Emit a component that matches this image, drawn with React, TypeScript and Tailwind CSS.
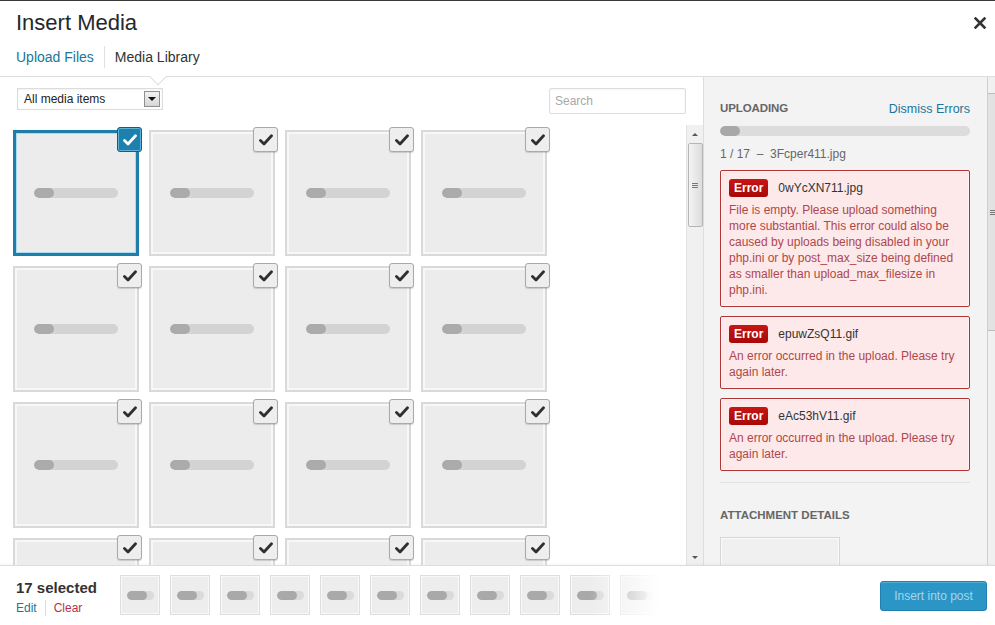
import React from "react";

const FONT = { fontFamily: '"Liberation Sans", Arial, sans-serif' };

function Check({ selected }: { selected?: boolean }) {
  return (
    <div
      className={`absolute -top-[3px] -right-[3px] w-[25px] h-[25px] rounded-[3px] flex items-center justify-center ${
        selected
          ? "bg-[#1e80ad] border border-[#0f5f84] shadow-[inset_0_0_0_1px_#5fb1d6]"
          : "bg-[#eeeeee] border border-[#a9a9a9] shadow-[0_1px_1px_rgba(0,0,0,0.15)]"
      }`}
    >
      <svg width="14" height="12" viewBox="0 0 14 12">
        <path
          d="M1.5 6.5 L5 10 L12.5 1.8"
          fill="none"
          stroke={selected ? "#ffffff" : "#2f2f2f"}
          strokeWidth="2.8"
          strokeLinecap="round"
          strokeLinejoin="round"
        />
      </svg>
    </div>
  );
}

function Tile({ selected }: { selected?: boolean }) {
  return (
    <div className="relative w-[126px] h-[126px]">
      <div
        className={`w-full h-full flex items-center justify-center bg-[#ececec] ${
          selected
            ? "border-[3px] border-[#1f7ea9] shadow-[inset_0_0_0_1px_#a9dcef]"
            : "border-[2px] border-[#d9d9d9] shadow-[inset_0_0_0_2px_#f7f7f7]"
        }`}
      >
        <div className="w-[84px] h-[10px] rounded-full bg-[#d3d3d3] overflow-hidden">
          <div className="w-[20px] h-full rounded-full bg-[#ababab]" />
        </div>
      </div>
      <Check selected={selected} />
    </div>
  );
}

function Thumb() {
  return (
    <div className="w-[40px] h-[40px] bg-[#ededed] border border-[#dedede] shadow-[inset_0_0_0_1px_#f8f8f8] flex items-center pl-[6px]">
      <div className="w-[27px] h-[9px] rounded-full bg-[#dadada] overflow-hidden">
        <div className="w-[20px] h-full rounded-full bg-[#a9a9a9]" />
      </div>
    </div>
  );
}

function ErrorBox({ file, msg }: { file: string; msg: string }) {
  return (
    <div className="border border-[#b13535] bg-[#fde9e9] rounded-[2px] px-[8px] pt-[6px] pb-[8px] shadow-[inset_0_0_0_1px_#fff3f3]">
      <div className="flex items-center h-[22px]">
        <span className="inline-flex items-center justify-center h-[18px] px-[5px] rounded-[3px] bg-gradient-to-b from-[#c81515] to-[#a80808] text-white font-bold text-[12px]">
          Error
        </span>
        <span className="ml-[10px] text-[12px] text-[#333]">{file}</span>
      </div>
      <p className="mt-[3px] text-[12px] leading-[16px] text-[#b0474a]">{msg}</p>
    </div>
  );
}

function Scrollbar() {
  return (
    <div className="w-[17px] h-full bg-[#f0f0f0] border-l border-[#e2e2e2] flex flex-col items-center">
      <div className="h-[18px] flex items-center justify-center">
        <div className="w-0 h-0 border-l-[3px] border-r-[3px] border-b-[3px] border-l-transparent border-r-transparent border-b-[#555]" />
      </div>
      <div className="w-[15px] h-[84px] rounded-[2px] border border-[#b5b5b5] bg-gradient-to-r from-[#f4f4f4] to-[#dcdcdc] flex items-center justify-center">
        <div className="flex flex-col gap-[1px]">
          <div className="w-[6px] h-[1px] bg-[#777]" />
          <div className="w-[6px] h-[1px] bg-[#777]" />
          <div className="w-[6px] h-[1px] bg-[#777]" />
        </div>
      </div>
      <div className="flex-1" />
      <div className="h-[16px] flex items-center justify-center">
        <div className="w-0 h-0 border-l-[3px] border-r-[3px] border-t-[3px] border-l-transparent border-r-transparent border-t-[#555]" />
      </div>
    </div>
  );
}

export default function App() {
  return (
    <div style={FONT} className="w-[995px] h-[625px] overflow-hidden bg-white border-t border-[#3a3a3a] flex flex-col text-[#333]">
      {/* Header */}
      <div className="h-[76px] shrink-0 relative border-b border-[#dddddd]">
        <div className="pl-[16px] pt-[9px] text-[22px] leading-[26px] text-[#23282d]">Insert Media</div>
        <div className="absolute right-[3px] top-[10px] w-[24px] h-[24px] flex items-center justify-center">
          <svg width="12" height="12" viewBox="0 0 12 12">
            <path d="M1.5 1.5 L10.5 10.5 M10.5 1.5 L1.5 10.5" stroke="#333" strokeWidth="2.6" strokeLinecap="square" />
          </svg>
        </div>
        <div className="flex items-center pl-[16px] mt-[10px] text-[14px] leading-[20px]">
          <span className="text-[#21759b]">Upload Files</span>
          <span className="mx-[10px] w-px h-[22px] bg-[#e0e0e0]" />
          <span className="text-[#333]">Media Library</span>
        </div>
        <div className="absolute left-[152px] -bottom-[7px] w-[12px] h-[12px] rotate-45 bg-white border-r border-b border-[#dddddd]" />
      </div>

      {/* Body */}
      <div className="flex h-[488px] shrink-0">
        {/* Left */}
        <div className="w-[703px] flex flex-col">
          <div className="h-[48px] shrink-0 flex items-start justify-between pl-[17px] pr-[17px] pt-[11px]">
            <div className="w-[146px] h-[22px] border border-[#dcdcdc] bg-white flex items-center justify-between pl-[6px] pr-[2px] shadow-[inset_0_1px_2px_rgba(0,0,0,0.06)]">
              <span className="text-[12px] text-[#222]">All media items</span>
              <div className="w-[16px] h-[16px] border border-[#8f8f8f] bg-gradient-to-b from-[#f2f2f2] to-[#d6d6d6] flex items-center justify-center">
                <div className="w-0 h-0 border-l-[4px] border-r-[4px] border-t-[4px] border-l-transparent border-r-transparent border-t-[#111]" />
              </div>
            </div>
            <div className="w-[137px] h-[26px] border border-[#dddddd] rounded-[2px] bg-white flex items-center pl-[5px] shadow-[inset_0_1px_2px_rgba(0,0,0,0.05)]">
              <span className="text-[12px] text-[#a8a8a8]">Search</span>
            </div>
          </div>
          <div className="flex-1 flex overflow-hidden">
            <div className="flex-1 overflow-hidden pl-[13px] pt-[5px]">
              <div className="grid grid-cols-[repeat(4,126px)] gap-[10px]">
                {Array.from({ length: 16 }).map((_, i) => (
                  <Tile key={i} selected={i === 0} />
                ))}
              </div>
            </div>
            <Scrollbar />
          </div>
        </div>

        {/* Sidebar */}
        <div className="flex-1 bg-[#f3f3f3] border-l border-[#dddddd] flex overflow-hidden">
          <div className="w-[283px] shrink-0 pl-[16px] pr-[17px] pt-[24px]">
            <div className="flex items-center justify-between h-[16px]">
              <span className="text-[11.5px] font-bold text-[#666] tracking-[-0.1px]">UPLOADING</span>
              <span className="text-[12.5px] text-[#21759b]">Dismiss Errors</span>
            </div>
            <div className="mt-[9px] h-[10px] rounded-full bg-[#dcdcdc] overflow-hidden">
              <div className="w-[20px] h-full rounded-full bg-[#a8a8a8]" />
            </div>
            <div className="mt-[10px] text-[12px] leading-[16px] text-[#666]">1 / 17 &nbsp;–&nbsp; 3Fcper411.jpg</div>
            <div className="mt-[8px] flex flex-col gap-[9px]">
              <ErrorBox
                file="0wYcXN711.jpg"
                msg="File is empty. Please upload something more substantial. This error could also be caused by uploads being disabled in your php.ini or by post_max_size being defined as smaller than upload_max_filesize in php.ini."
              />
              <ErrorBox file="epuwZsQ11.gif" msg="An error occurred in the upload. Please try again later." />
              <ErrorBox file="eAc53hV11.gif" msg="An error occurred in the upload. Please try again later." />
            </div>
            <div className="mt-[11px] h-px bg-[#e2e2e2]" />
            <div className="mt-[24px] text-[11.5px] font-bold text-[#666] leading-[16px]">ATTACHMENT DETAILS</div>
            <div className="mt-[14px] w-[120px] h-[60px] border border-[#d6d6d6] bg-[#f0f0f0] shadow-[inset_0_0_0_1px_#fafafa]" />
          </div>
          <div className="flex-1" />
          <div className="w-[8px] shrink-0 bg-[#f0f0f0] border-l border-[#cfcfcf] flex flex-col">
            <div className="h-[16px]" />
            <div className="h-[238px] border-t border-b border-[#bdbdbd] bg-[#e2e2e2] flex items-center pl-[2px]">
              <div className="flex flex-col gap-[1px]">
                <div className="w-[6px] h-[1px] bg-[#777]" />
                <div className="w-[6px] h-[1px] bg-[#777]" />
                <div className="w-[6px] h-[1px] bg-[#777]" />
              </div>
            </div>
          </div>
        </div>
      </div>

      {/* Footer */}
      <div className="flex-1 border-t border-[#dddddd] bg-white flex items-start shadow-[0_-1px_3px_rgba(0,0,0,0.04)]">
        <div className="w-[120px] shrink-0 pl-[16px] pt-[13px]">
          <div className="text-[15px] font-bold text-[#333] leading-[18px]">17 selected</div>
          <div className="flex items-center mt-[3px] text-[12px] leading-[16px]">
            <span className="text-[#21759b]">Edit</span>
            <span className="mx-[8px] w-px h-[16px] bg-[#ddd]" />
            <span className="text-[#b3324a]">Clear</span>
          </div>
        </div>
        <div className="relative mt-[9px] flex gap-[10px] w-[540px] overflow-hidden">
          {Array.from({ length: 11 }).map((_, i) => (
            <Thumb key={i} />
          ))}
          <div className="absolute top-0 bottom-0 left-[470px] w-[70px] bg-gradient-to-r from-transparent to-white" />
        </div>
        <div className="flex-1" />
        <div className="mt-[15px] mr-[8px] w-[107px] h-[30px] rounded-[3px] bg-[#2b95c5] border border-[#1f7fae] flex items-center justify-center shadow-[inset_0_1px_0_rgba(120,200,230,0.5)]">
          <span className="text-[12px] text-[#a3d5ec]">Insert into post</span>
        </div>
      </div>
    </div>
  );
}
